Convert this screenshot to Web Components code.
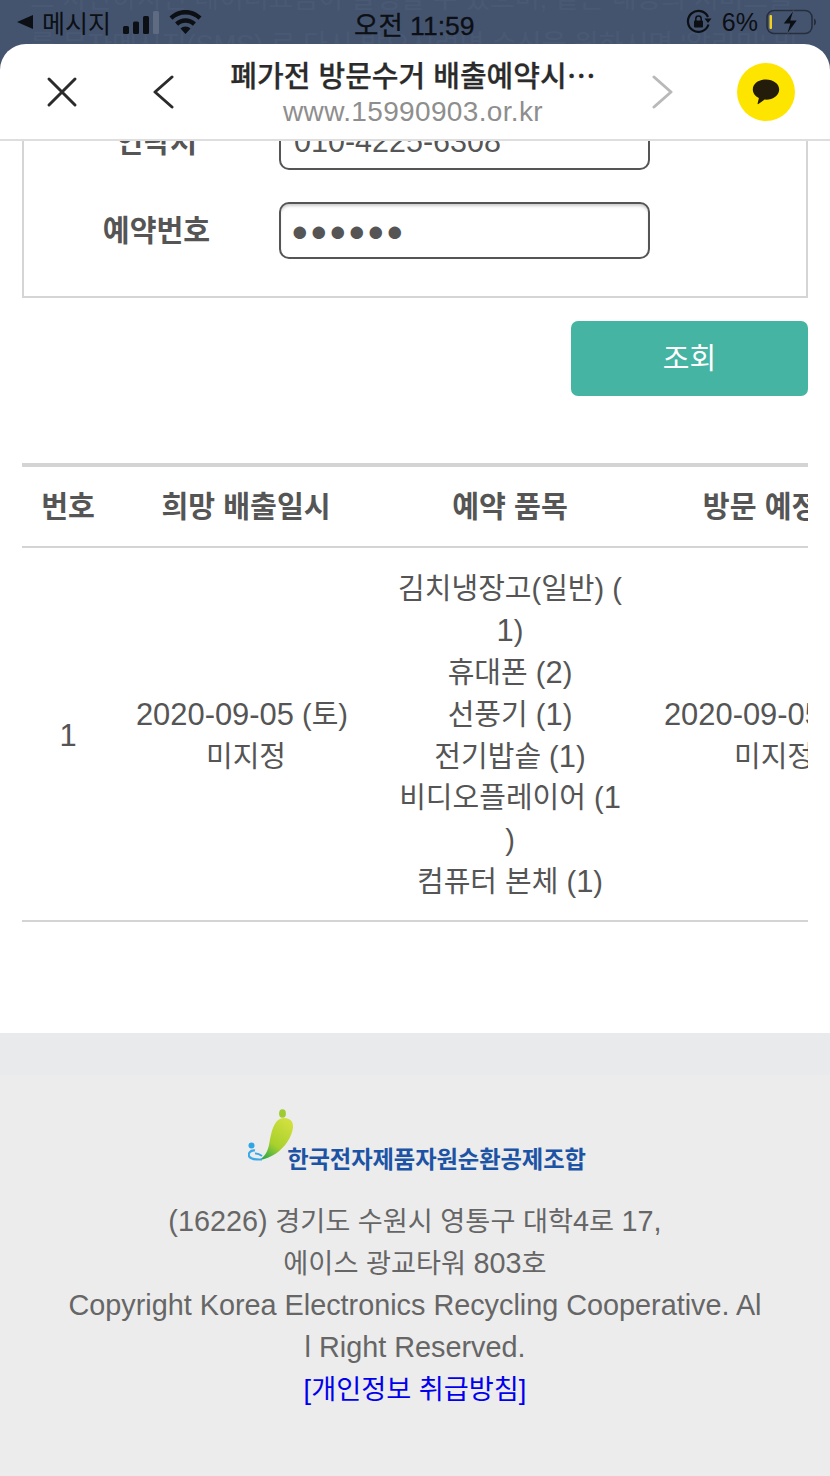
<!DOCTYPE html>
<html lang="ko">
<head>
<meta charset="utf-8">
<title>폐가전 방문수거 배출예약시스템</title>
<style>
  html, body { margin: 0; padding: 0; background: #fff; }
  body {
    width: 830px;
    height: 1476px;
    overflow: hidden;
    font-family: "Liberation Sans", "Noto Sans CJK KR", sans-serif;
    display: flex;
    flex-direction: column;
    background: #44546f;
  }
</style>
</head>
<body>
<status-bar></status-bar>
<browser-bar title="폐가전 방문수거 배출예약시⋯" url="www.15990903.or.kr"></browser-bar>
<page-view>
  <lookup-form>
    <form-row label="연락처" value="010-4225-6308"></form-row>
    <form-row label="예약번호" value="●●●●●●" secret></form-row>
  </lookup-form>
  <action-row>조회</action-row>
  <reservation-table></reservation-table>
  <site-footer></site-footer>
</page-view>

<script>
class StatusBar extends HTMLElement {
  constructor() {
    super();
    this.attachShadow({ mode: 'open' });
    this.shadowRoot.innerHTML = `
      <style>
        :host {
          display: flex;
          position: relative;
          height: 44px;
          flex: none;
          align-items: center;
          justify-content: space-between;
          padding: 0 14px 0 16px;
          box-sizing: border-box;
          background: #44546f;
          color: #0c0f14;
          font-size: 25px;
          overflow: hidden;
        }
        .ghost {
          position: absolute;
          left: 30px;
          white-space: nowrap;
          color: #4a5973;
          font-size: 27px;
          line-height: 30px;
        }
        .g1 { top: -16px; }
        .g2 { top: 30px; }
        .side { display: flex; align-items: center; position: relative; }
        .time {
          position: absolute;
          left: 354px;
          top: 4px;
          font-size: 26.500px;
          -webkit-text-stroke: 0.3px #0c0f14;
        }
        svg { display: block; }
      </style>
      <div class="ghost g1">스 차단하시면 데이터요금이 발생할 수 있으며, 같은 내용의 서비스를</div>
      <div class="ghost g2">를 문자메시지(SMS) 로 다시 받으시려면 수신을 원하시면 '알리미' 및</div>
      <div class="side">
        <svg width="18" height="18" viewBox="0 0 18 18"><path d="M17 2v14L1 9z" fill="#0c0f14"/></svg>
        <span style="margin:0 12px 0 8px">메시지</span>
        <svg width="36" height="23" viewBox="0 0 36 23">
          <rect x="0" y="15" width="6" height="8" rx="1.500" fill="#0c0f14"/>
          <rect x="10" y="10.500" width="6" height="12.500" rx="1.500" fill="#0c0f14"/>
          <rect x="20" y="5" width="6" height="18" rx="1.500" fill="#0c0f14"/>
          <rect x="30" y="0" width="6" height="23" rx="1.500" fill="#5f6b80"/>
        </svg>
        <svg style="margin-left:10px" width="33" height="24" viewBox="0 0 33 24" fill="#0c0f14">
          <path d="M16.500 0C10 0 4.500 2.600.5 6.600l3 3.200C6.700 6.500 11.300 4.500 16.500 4.500s9.800 2 13 5.300l3-3.200C28.500 2.600 23 0 16.500 0z"/>
          <path d="M16.500 8.300c-4.100 0-7.800 1.700-10.400 4.300l3 3.200c1.900-1.900 4.500-3.100 7.400-3.100s5.500 1.200 7.400 3.100l3-3.200c-2.600-2.600-6.300-4.300-10.400-4.300z"/>
          <path d="M16.500 16.500c-2 0-3.700.8-5 2.100l5 5.400 5-5.400c-1.300-1.300-3-2.100-5-2.100z"/>
        </svg>
      </div>
      <div class="time">오전 11:59</div>
      <div class="side">
        <svg width="26" height="26" viewBox="0 0 26 26" fill="none">
          <path d="M22.500 15.500A10.500 10.500 0 1 1 22 8" stroke="#0c0f14" stroke-width="2.200"/>
          <path d="M25.500 9.500h-7l3.500 4.500z" fill="#0c0f14"/>
          <rect x="8" y="11.500" width="9" height="7" rx="1" fill="#0c0f14"/>
          <path d="M9.800 12V9.800a2.700 2.700 0 0 1 5.400 0V12" stroke="#0c0f14" stroke-width="1.500"/>
        </svg>
        <span style="margin:0 8px 0 10px">6%</span>
        <svg width="50" height="26" viewBox="0 0 50 26" fill="none">
          <rect x="1" y="1.500" width="45" height="23" rx="7" stroke="#262e3e" stroke-width="1.600"/>
          <rect x="3.500" y="6" width="2.500" height="14" rx="1" fill="#f5d21f"/>
          <path d="M48 9.500c1.200.5 2 1.800 2 3.500s-.8 3-2 3.500z" fill="#262e3e"/>
          <path d="M21 26l3-10h-7.500L28 0l-3 10.500h7.500z" fill="#44546f"/>
          <path d="M21.500 24l2.800-9.500h-6.500L27 2.500l-2.800 9h6.500z" fill="#0c0f14"/>
        </svg>
      </div>
    `;
  }
}

class BrowserBar extends HTMLElement {
  constructor() {
    super();
    this.attachShadow({ mode: 'open' });
  }

  connectedCallback() {
    this.shadowRoot.innerHTML = `
      <style>
        :host {
          display: flex;
          flex: none;
          position: relative;
          z-index: 2;
          height: 97px;
          box-sizing: border-box;
          align-items: center;
          background: #fff;
          border-radius: 26px 26px 0 0;
          border-bottom: 2px solid #dedede;
          padding-left: 46px;
          padding-right: 35px;
        }
        svg { display: block; flex: none; }
        .titles {
          width: 400px;
          margin-left: 39px;
          text-align: center;
          flex: none;
          margin-top: 2px;
        }
        .title { font-size: 29px; font-weight: 500; color: #2b2b2b; line-height: 38px; -webkit-text-stroke: 0.25px #2b2b2b; white-space: nowrap; }
        .url { font-size: 28px; color: #8e8e8e; line-height: 32px; letter-spacing: 0.350px; }
        .kakao { margin-left: auto; }
      </style>
      <svg width="32" height="32" viewBox="0 0 32 32" fill="none" stroke="#2b2b2b" stroke-width="3" stroke-linecap="round">
        <path d="M3 3l26 26M29 3L3 29"/>
      </svg>
      <svg style="margin-left:74px" width="22" height="34" viewBox="0 0 22 34" fill="none" stroke="#2b2b2b" stroke-width="3" stroke-linecap="round" stroke-linejoin="round">
        <path d="M20 2L3 17l17 15"/>
      </svg>
      <div class="titles">
        <div class="title">${this.getAttribute('title')}</div>
        <div class="url">${this.getAttribute('url')}</div>
      </div>
      <svg style="margin-left:38px" width="22" height="34" viewBox="0 0 22 34" fill="none" stroke="#b9b9b9" stroke-width="3" stroke-linecap="round" stroke-linejoin="round">
        <path d="M3 2l17 15L3 32"/>
      </svg>
      <svg class="kakao" width="58" height="58" viewBox="0 0 58 58">
        <circle cx="29" cy="29" r="29" fill="#fee500"/>
        <path d="M29 16.500c-7.300 0-13.200 4.400-13.200 10 0 3.600 2.400 6.700 6.100 8.500l-1.300 5.600c-.1.500.4.800.8.500l6.200-4.500c.5 0 .9.100 1.400.1 7.300 0 13.200-4.500 13.200-10.200 0-5.600-5.900-10-13.200-10z" fill="#231c0a"/>
      </svg>
    `;
  }
}

class PageView extends HTMLElement {
  constructor() {
    super();
    this.attachShadow({ mode: 'open' });
    this.shadowRoot.innerHTML = `
      <style>
        :host {
          display: block;
          flex: 1;
          min-height: 0;
          background: #fff;
          overflow: hidden;
        }
        .scrolled {
          /* page is scrolled: the first form row sits under the browser bar */
          margin-top: -62px;
          display: flow-root;
        }
      </style>
      <div class="scrolled"><slot></slot></div>
    `;
  }
}

class LookupForm extends HTMLElement {
  constructor() {
    super();
    this.attachShadow({ mode: 'open' });
    this.shadowRoot.innerHTML = `
      <style>
        :host {
          display: flex;
          flex-direction: column;
          gap: 32px;
          margin: 0 22px;
          padding-top: 34px;
          border: 2px solid #d5d5d5;
          border-top: 0;
          height: 219px;
          box-sizing: border-box;
        }
      </style>
      <slot></slot>
    `;
  }
}

class FormRow extends HTMLElement {
  constructor() {
    super();
    this.attachShadow({ mode: 'open' });
  }

  connectedCallback() {
    const secret = this.hasAttribute('secret');
    this.shadowRoot.innerHTML = `
      <style>
        :host {
          display: flex;
          align-items: center;
          height: 57px;
          flex: none;
          color: #555;
        }
        .label {
          width: 255px;
          box-sizing: border-box;
          padding: 0 0 5px 10px;
          text-align: center;
          font-size: 29.200px;
          font-weight: 700;
          flex: none;
        }
        .field {
          width: 371px;
          height: 57px;
          box-sizing: border-box;
          border: 2px solid #555;
          border-radius: 10px;
          padding: 0 13px;
          display: flex;
          align-items: center;
          font-size: 30.500px;
          color: #555;
          ${secret ? 'box-shadow: inset 0 3px 3px -1px #ccc;' : ''}
        }
        .dots { font-size: 29px; letter-spacing: 1.500px; margin: 2px 0 0 -3px; }
      </style>
      <div class="label">${this.getAttribute('label')}</div>
      <div class="field"><span class="${secret ? 'dots' : ''}">${this.getAttribute('value')}</span></div>
    `;
  }
}

class ActionRow extends HTMLElement {
  constructor() {
    super();
    this.attachShadow({ mode: 'open' });
    this.shadowRoot.innerHTML = `
      <style>
        :host {
          display: flex;
          justify-content: flex-end;
          margin: 23px 22px 67px;
        }
        button {
          all: unset;
          width: 237px;
          height: 75px;
          background: #45b4a3;
          border-radius: 7px;
          color: #fff;
          font-size: 29px;
          text-align: center;
          line-height: 77px;
        }
      </style>
      <button><slot></slot></button>
    `;
  }
}

class ReservationTable extends HTMLElement {
  constructor() {
    super();
    this.attachShadow({ mode: 'open' });
    this.shadowRoot.innerHTML = `
      <style>
        :host {
          display: block;
          margin: 0 22px;
          overflow: hidden;
          color: #555;
          font-size: 29px;
          line-height: 41.800px;
        }
        table {
          border-collapse: collapse;
          table-layout: fixed;
          width: 884px;
          border-top: 4px solid #d4d4d4;
          text-align: center;
        }
        th { height: 77px; padding: 2px 0 0; font-size: 29.200px; font-weight: 700; border-bottom: 2px solid #d4d4d4; white-space: nowrap; }
        td { height: 367px; padding: 5px 0 0; border-bottom: 2px solid #d4d4d4; }
        .n { font-size: 30.900px; line-height: 0; }
      </style>
      <table>
        <colgroup><col style="width:92px"><col style="width:264px"><col style="width:264px"><col style="width:264px"></colgroup>
        <thead>
          <tr><th>번호</th><th>희망 배출일시</th><th>예약 품목</th><th>방문 예정일</th></tr>
        </thead>
        <tbody>
          <tr>
            <td><span class="n">1</span></td>
            <td><span class="n">2020-09-05</span> (토)&nbsp;<br>미지정</td>
            <td>김치냉장고(일반) (<br><span class="n">1</span>)<br>휴대폰 (<span class="n">2</span>)<br>선풍기 (<span class="n">1</span>)<br>전기밥솥 (<span class="n">1</span>)<br>비디오플레이어 (<span class="n">1</span><br>)<br>컴퓨터 본체 (<span class="n">1</span>)</td>
            <td><span class="n">2020-09-05</span> (토)&nbsp;<br>미지정</td>
          </tr>
        </tbody>
      </table>
    `;
  }
}

class SiteFooter extends HTMLElement {
  constructor() {
    super();
    this.attachShadow({ mode: 'open' });
    this.shadowRoot.innerHTML = `
      <style>
        :host {
          display: block;
          margin-top: 111px;
          height: 450px;
          box-sizing: border-box;
          padding: 76px 66px 0;
          background: linear-gradient(#e8eaec 42px, #ececec 42px);
          color: #666;
          font-size: 27.200px;
          line-height: 42px;
          text-align: center;
          word-break: break-all;
        }
        .logo {
          display: flex;
          justify-content: center;
          align-items: flex-end;
          height: 53px;
          padding-left: 4px;
          margin-bottom: 39px;
          line-height: 1;
        }
        .logo svg { display: block; flex: none; }
        .name {
          margin-left: -7px;
          margin-bottom: -10px;
          color: #1c53a5;
          font-size: 23.300px;
          font-weight: 700;
          white-space: nowrap;
          letter-spacing: -0.1px;
        }
        .l { font-size: 28.800px; line-height: 0; }
        a { color: #0000ee; text-decoration: none; }
      </style>
      <div class="logo">
        <svg width="46" height="53" viewBox="0 0 46 53">
          <defs>
            <linearGradient id="leaf" x1="0.75" y1="0.05" x2="0.2" y2="1">
              <stop offset="0" stop-color="#cfdf3e"/>
              <stop offset="0.6" stop-color="#a8d02c"/>
              <stop offset="1" stop-color="#2ea84c"/>
            </linearGradient>
          </defs>
          <ellipse cx="34.500" cy="4.500" rx="3.400" ry="4.300" fill="#9fcb30"/>
          <path d="M36 9c6 0 9.500 3.500 9 9.500-.7 8.500-8 20-17 26-5 3-11 6-17 6.500 5-2.500 8.500-8 10-15 2-10 4-27 15-27z" fill="url(#leaf)"/>
          <circle cx="3.500" cy="36.500" r="3" fill="#2fa5e6"/>
          <path d="M7 41.500C2 41 -.5 45 1.500 48c2.500 3 7.500 2.500 12.500 2.500" fill="none" stroke="#3aa9e8" stroke-width="2.200"/>
          <path d="M7 44.500c3-.5 5 1 7 2.500" fill="none" stroke="#3aa9e8" stroke-width="2"/>
        </svg>
        <span class="name">한국전자제품자원순환공제조합</span>
      </div>
      <div><span class="l">(16226)</span> 경기도 수원시 영통구 대학<span class="l">4</span>로 <span class="l">17,</span><br>에이스 광교타워 <span class="l">803</span>호<br><span class="l">Copyright Korea Electronics Recycling Cooperative. All Right Reserved.</span><br><a href="#">[개인정보 취급방침]</a></div>
    `;
  }
}

customElements.define('status-bar', StatusBar);
customElements.define('browser-bar', BrowserBar);
customElements.define('page-view', PageView);
customElements.define('lookup-form', LookupForm);
customElements.define('form-row', FormRow);
customElements.define('action-row', ActionRow);
customElements.define('reservation-table', ReservationTable);
customElements.define('site-footer', SiteFooter);
</script>
</body>
</html>
